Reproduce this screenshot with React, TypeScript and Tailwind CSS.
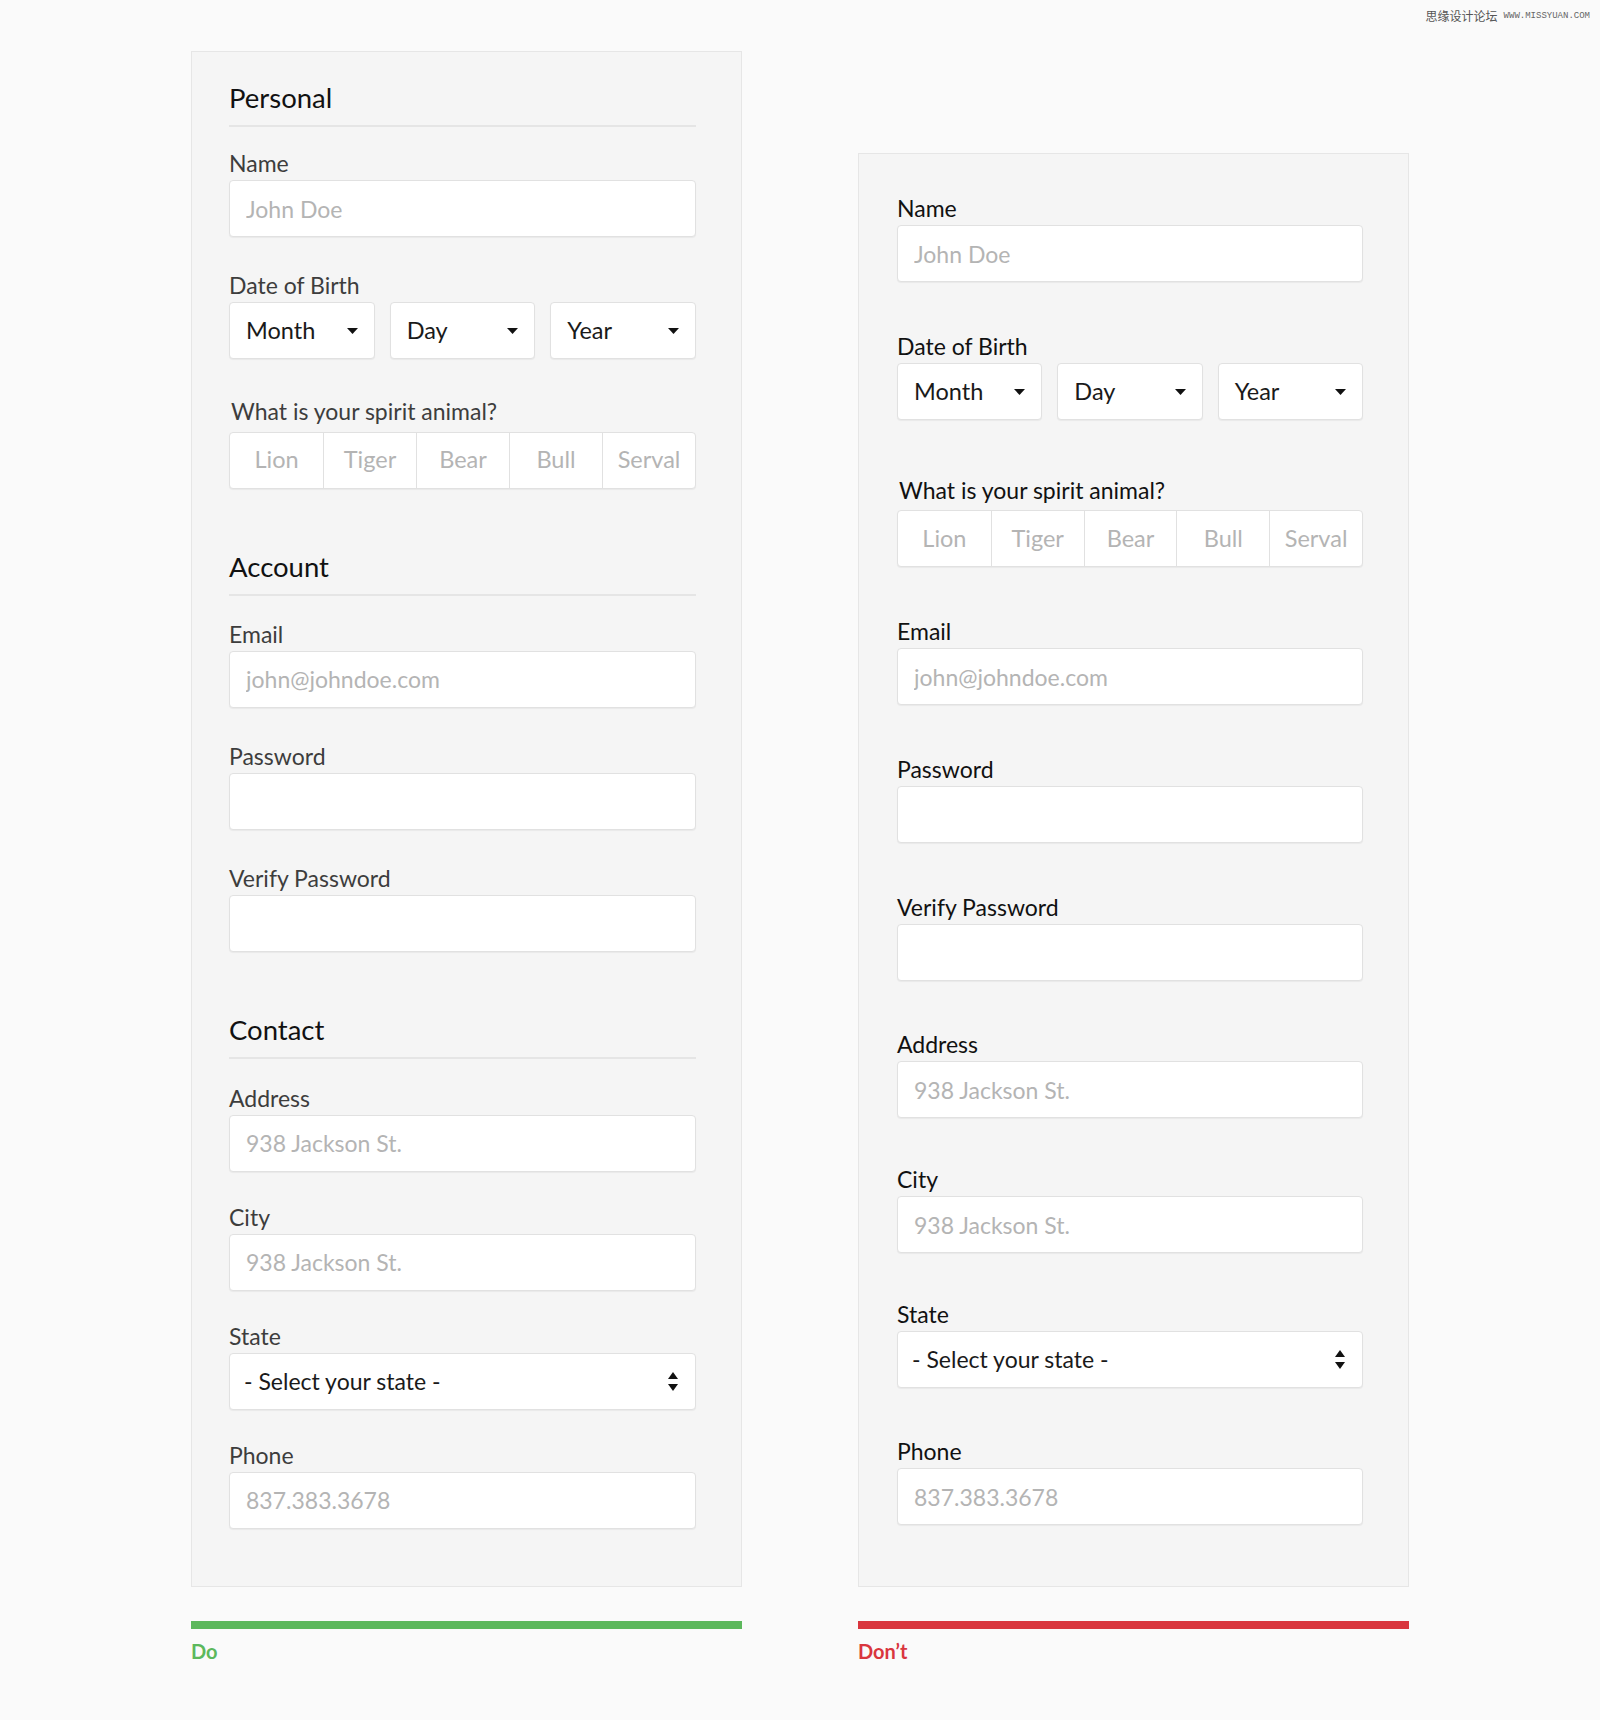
import React from "react";

const Caret = () => (
  <svg width="11" height="6" viewBox="0 0 11 6" className="shrink-0">
    <path d="M0 0h11L5.5 6z" fill="#111" />
  </svg>
);

const UpDown = () => (
  <svg width="10" height="19" viewBox="0 0 10 19" className="shrink-0">
    <path d="M5 0l5 7H0z" fill="#111" />
    <path d="M0 12h10l-5 7z" fill="#111" />
  </svg>
);

type LabelTone = "gray" | "black";

function Label({ children, tone, extra = "" }: { children: React.ReactNode; tone: LabelTone; extra?: string }) {
  return (
    <label
      className={
        "block text-[23px] leading-[28px] " +
        (tone === "gray" ? "text-[#3d3d3d] " : "text-[#111111] ") +
        extra
      }
    >
      {children}
    </label>
  );
}

function TextInput({ placeholder, type = "text" }: { placeholder?: string; type?: string }) {
  return (
    <input
      type={type}
      placeholder={placeholder}
      className="block w-full h-[57px] rounded-[4px] border border-[#e1e1e1] bg-white px-4 text-[23px] text-[#222] placeholder:text-[#b4b4b4] outline-none shadow-[0_1px_1px_rgba(0,0,0,0.05)]"
    />
  );
}

function Field({
  label,
  tone,
  placeholder,
  type,
  className = "",
}: {
  label: string;
  tone: LabelTone;
  placeholder?: string;
  type?: string;
  className?: string;
}) {
  return (
    <div className={className}>
      <Label tone={tone} extra="mb-[3px]">
        {label}
      </Label>
      <TextInput placeholder={placeholder} type={type} />
    </div>
  );
}

function SelectBox({ text }: { text: string }) {
  return (
    <div className="flex h-[57px] items-center justify-between rounded-[4px] border border-[#e1e1e1] bg-white pl-4 pr-4 text-[23.5px] text-[#1a1a1a] shadow-[0_1px_1px_rgba(0,0,0,0.05)]">
      <span>{text}</span>
      <Caret />
    </div>
  );
}

function DobField({ tone, className = "" }: { tone: LabelTone; className?: string }) {
  return (
    <div className={className}>
      <Label tone={tone} extra="mb-[3px]">
        Date of Birth
      </Label>
      <div className="grid grid-cols-3 gap-[15px]">
        <SelectBox text="Month" />
        <SelectBox text="Day" />
        <SelectBox text="Year" />
      </div>
    </div>
  );
}

const animals = ["Lion", "Tiger", "Bear", "Bull", "Serval"];

function SpiritField({ tone, className }: { tone: LabelTone; className: string }) {
  return (
    <div className={className}>
      <Label tone={tone} extra="mb-[6.5px] pl-[2px]">
        What is your spirit animal?
      </Label>
      <div className="grid h-[57px] grid-cols-5 overflow-hidden rounded-[4px] border border-[#e1e1e1] bg-white shadow-[0_1px_1px_rgba(0,0,0,0.05)]">
        {animals.map((a, i) => (
          <div
            key={a}
            className={
              "flex items-center justify-center text-[23.5px] text-[#b4b4b4] " +
              (i > 0 ? "border-l border-[#e1e1e1]" : "")
            }
          >
            {a}
          </div>
        ))}
      </div>
    </div>
  );
}

function StateField({ tone, className = "" }: { tone: LabelTone; className?: string }) {
  return (
    <div className={className}>
      <Label tone={tone} extra="mb-[3px]">
        State
      </Label>
      <div className="flex h-[57px] items-center justify-between rounded-[4px] border border-[#e1e1e1] bg-white pl-[14px] pr-[17px] text-[23px] text-[#1a1a1a] shadow-[0_1px_1px_rgba(0,0,0,0.05)]">
        <span>- Select your state -</span>
        <UpDown />
      </div>
    </div>
  );
}

function Heading({ children, extra = "" }: { children: React.ReactNode; extra?: string }) {
  return (
    <h2 className={"border-b-2 border-[#e5e5e5] pb-[10px] text-[27.5px] leading-[34px] text-[#111] " + extra}>
      {children}
    </h2>
  );
}

export default function App() {
  return (
    <div className="relative min-h-[1720px] w-full bg-[#fafafa] font-[Lato,sans-serif]">
      <div className="absolute right-[10px] top-[8px] flex items-center gap-[6px]">
        <span className="font-['Noto_Sans_CJK_SC',sans-serif] text-[12px] leading-[16px] text-[#555]">思缘设计论坛</span>
        <span className="font-['Liberation_Mono',monospace] text-[9px] leading-[16px] text-[#666]">WWW.MISSYUAN.COM</span>
      </div>

      <div className="flex items-end justify-center gap-[116px] pt-[51px]">
        {/* Do column */}
        <div className="flex w-[551px] flex-col">
          <div className="border border-[#e6e6e6] bg-[#f5f5f5] pb-[57px] pl-[37px] pr-[45px] pt-[29px]">
            <Heading>Personal</Heading>
            <div className="mt-[22px] flex flex-col gap-[34px]">
              <Field label="Name" tone="gray" placeholder="John Doe" />
              <DobField tone="gray" />
              <SpiritField tone="gray" className="mt-[4px]" />
            </div>

            <Heading extra="mt-[61px]">Account</Heading>
            <div className="mt-[24px] flex flex-col gap-[34px]">
              <Field label="Email" tone="gray" placeholder="john@johndoe.com" />
              <Field label="Password" tone="gray" type="password" />
              <Field label="Verify Password" tone="gray" type="password" />
            </div>

            <Heading extra="mt-[61px]">Contact</Heading>
            <div className="mt-[25px] flex flex-col gap-[31px]">
              <Field label="Address" tone="gray" placeholder="938 Jackson St." />
              <Field label="City" tone="gray" placeholder="938 Jackson St." />
              <StateField tone="gray" />
              <Field label="Phone" tone="gray" placeholder="837.383.3678" />
            </div>
          </div>
          <div className="mt-[34px] h-[8px] bg-[#5cb85c]" />
          <div className="mt-[10px] text-[20px] font-bold leading-[24px] text-[#5cb85c]">Do</div>
        </div>

        {/* Don't column */}
        <div className="flex w-[551px] flex-col">
          <div className="flex flex-col border border-[#e6e6e6] bg-[#f5f5f5] pb-[60.5px] pl-[38px] pr-[45px] pt-[40px]">
            <Field label="Name" tone="black" placeholder="John Doe" />
            <DobField tone="black" className="mt-[50px]" />
            <SpiritField tone="black" className="mt-[55.5px]" />
            <Field label="Email" tone="black" placeholder="john@johndoe.com" className="mt-[50px]" />
            <Field label="Password" tone="black" type="password" className="mt-[50px]" />
            <Field label="Verify Password" tone="black" type="password" className="mt-[50px]" />
            <Field label="Address" tone="black" placeholder="938 Jackson St." className="mt-[49px]" />
            <Field label="City" tone="black" placeholder="938 Jackson St." className="mt-[47px]" />
            <StateField tone="black" className="mt-[47px]" />
            <Field label="Phone" tone="black" placeholder="837.383.3678" className="mt-[49px]" />
          </div>
          <div className="mt-[34px] h-[8px] bg-[#d9363e]" />
          <div className="mt-[10px] text-[20px] font-bold leading-[24px] text-[#d9363e]">Don’t</div>
        </div>
      </div>
    </div>
  );
}
